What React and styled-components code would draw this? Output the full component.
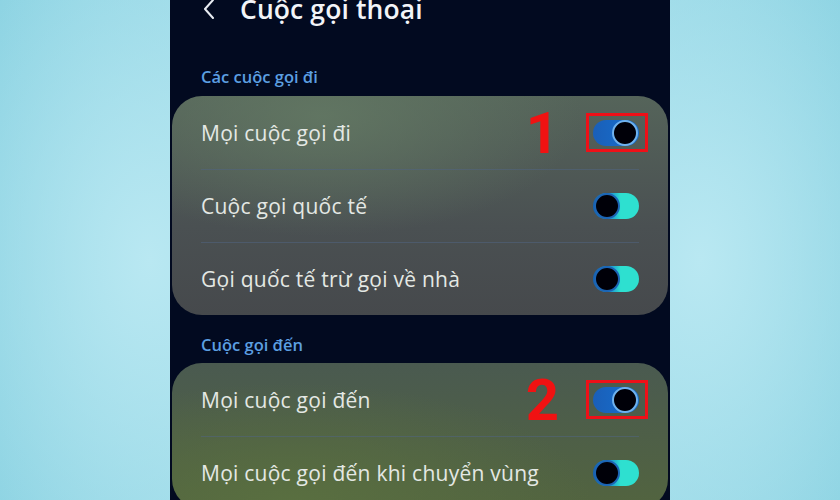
import React from "react";
import styled, { createGlobalStyle } from "styled-components";

const Global = createGlobalStyle`
  html, body { margin: 0; padding: 0; }
  body {
    width: 840px; height: 500px; overflow: hidden;
    font-family: "Open Sans", Roboto, "Noto Sans", "Liberation Sans", sans-serif;
  }
`;

const Page = styled.div`
  width: 840px; height: 500px;
  display: flex; justify-content: center;
  background:
    radial-gradient(ellipse 260px 420px at 150px 260px, #b9e8f2 0%, rgba(185,232,242,0) 100%),
    radial-gradient(ellipse 260px 420px at 700px 260px, #b9e8f2 0%, rgba(185,232,242,0) 100%),
    linear-gradient(90deg, #86d0e0 0%, #a8e0ec 50%, #86d0e0 100%);
`;

const Screen = styled.div`
  width: 500px; height: 500px; overflow: hidden;
  background: #020a20;
  display: flex; flex-direction: column;
`;

const Header = styled.div`
  height: 30px; margin-top: -6px;
  display: flex; align-items: center;
  padding-left: 33px; gap: 25px;
  color: #f2f4f8;
`;

const Title = styled.div`
  font-size: 26.5px; line-height: 30px; font-weight: 600; letter-spacing: 0.1px;
`;

const SectionLabel = styled.div`
  margin: ${p => p.$top}px 0 ${p => p.$bottom}px 31px;
  font-size: 16.5px; line-height: 20px; font-weight: 600;
  color: #5c9fe2;
`;

const Card = styled.div`
  margin: 0 2px;
  border-radius: 30px;
  padding: 0 29px;
  background: ${p => p.$bg};
  flex-shrink: 0;
`;

const Row = styled.div`
  height: 73px;
  display: flex; align-items: center; justify-content: space-between;
  border-top: ${p => (p.$first ? "none" : "1px solid rgba(80,100,130,0.55)")};
  box-sizing: border-box;
`;

const Label = styled.div`
  font-size: 21px; color: #e4e8e4; letter-spacing: 0.25px;
`;

const ToggleWrap = styled.div`
  position: relative;
  width: 46px; height: 26px;
`;

const Track = styled.div`
  width: 46px; height: 26px; border-radius: 13px;
  background: ${p => (p.$on ? "linear-gradient(90deg,#1a5fb8,#1670d0)" : "linear-gradient(90deg,#1560b0 0%,#1e9ad0 40%,#2ee0d0 60%,#2ee0d0 100%)")};
  display: flex; align-items: center;
  justify-content: ${p => (p.$on ? "flex-end" : "flex-start")};
  box-sizing: border-box;
  padding: 0 1px;
`;

const Knob = styled.div`
  width: 22px; height: 22px; border-radius: 50%;
  background: #000008;
  border: 2px solid ${p => (p.$on ? "#6fb2ee" : "#1c64b4")};
`;

const Highlight = styled.div`
  position: absolute;
  top: -7px; bottom: -6px; left: -7px; right: -9px;
  border: 3px solid #ee1018;
`;

const StepNum = styled.div`
  position: absolute;
  right: calc(100% + 34px);
  top: 50%; transform: translateY(-50%);
  font-size: 58px; line-height: 58px; font-weight: 700;
  color: #f01212;
  font-family: Roboto, "Liberation Sans", sans-serif;
`;

function Toggle({ on, step }) {
  return (
    <ToggleWrap>
      <Track $on={on}><Knob $on={on} /></Track>
      {step && <Highlight />}
      {step && <StepNum>{step}</StepNum>}
    </ToggleWrap>
  );
}

const card1Bg = `
  radial-gradient(ellipse 260px 120px at 150px 20px, rgba(100,122,100,0.8) 0%, rgba(100,122,100,0) 100%),
  linear-gradient(180deg, #55645a 0%, #4a5052 60%, #46494c 100%)
`;
const card2Bg = `
  radial-gradient(ellipse 300px 120px at 120px 140px, rgba(90,112,64,0.9) 0%, rgba(90,112,64,0) 100%),
  linear-gradient(180deg, #4a5a50 0%, #52643f 100%)
`;

export default function App() {
  return (
    <>
      <Global />
      <Page>
        <Screen>
          <Header>
            <svg width="12" height="20" viewBox="0 0 12 20">
              <path d="M10 1 L2 10 L10 19" fill="none" stroke="#e8ecf2" strokeWidth="2" strokeLinecap="round" strokeLinejoin="round" />
            </svg>
            <Title>Cuộc gọi thoại</Title>
          </Header>
          <SectionLabel $top={43} $bottom={9}>Các cuộc gọi đi</SectionLabel>
          <Card $bg={card1Bg}>
            <Row $first><Label>Mọi cuộc gọi đi</Label><Toggle on step="1" /></Row>
            <Row><Label>Cuộc gọi quốc tế</Label><Toggle /></Row>
            <Row><Label>Gọi quốc tế trừ gọi về nhà</Label><Toggle /></Row>
          </Card>
          <SectionLabel $top={20} $bottom={8}>Cuộc gọi đến</SectionLabel>
          <Card $bg={card2Bg}>
            <Row $first><Label>Mọi cuộc gọi đến</Label><Toggle on step="2" /></Row>
            <Row><Label>Mọi cuộc gọi đến khi chuyển vùng</Label><Toggle /></Row>
          </Card>
        </Screen>
      </Page>
    </>
  );
}
